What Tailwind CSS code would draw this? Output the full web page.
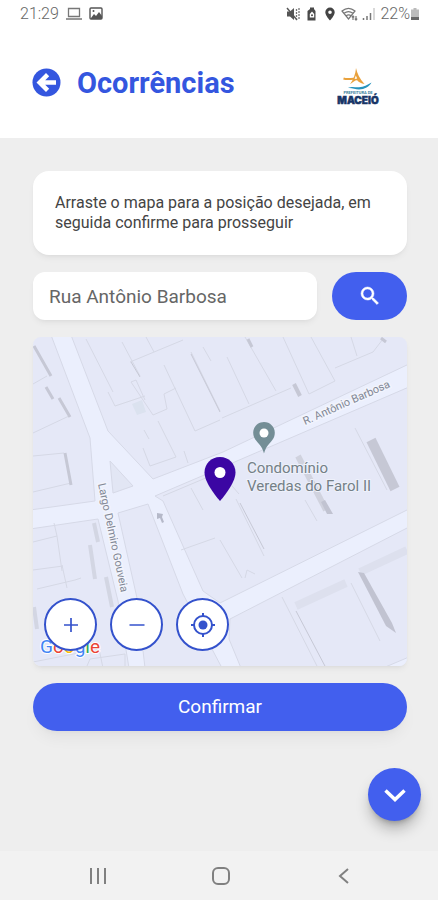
<!DOCTYPE html>
<html lang="pt-BR">
<head>
  <meta charset="UTF-8" />
  <meta name="viewport" content="width=device-width, initial-scale=1.0"/>
  <title>Ocorrências</title>
  <script src="https://cdn.jsdelivr.net/npm/@tailwindcss/browser@4"></script>
</head>
<body class="min-h-screen flex flex-col bg-[#eeeeee] font-[Roboto,sans-serif] text-[#444444]">

  <!-- Header -->
  <header class="bg-white h-[138px] flex flex-col shrink-0">
    <div class="h-[27px] pl-5 pr-[18px] flex items-center justify-between text-base font-light text-[#666666]">
      <div class="flex items-center gap-[7px]">
        <span>21:29</span>
        <svg class="w-4 h-[14px]" viewBox="0 0 16 14" fill="none" stroke="#777777" aria-hidden="true">
          <path d="M2.5 1.5h11v8h-11z M0 12h16" stroke-width="1.3"/>
        </svg>
        <svg class="w-[14px] h-[14px]" viewBox="0 0 14 14" aria-hidden="true">
          <rect x="1" y="1" width="12" height="11" rx="1" fill="none" stroke="#555555" stroke-width="1.4"/>
          <path d="M2 11l3-4 2 2 3-4 3 4v3H2z" fill="#555555"/>
          <circle cx="4.5" cy="4" r="1" fill="#555555"/>
        </svg>
      </div>
      <div class="flex items-center gap-1">
        <svg class="w-[15px] h-[14px]" viewBox="0 0 15 14" aria-hidden="true">
          <path d="M1 4.5h3L8 1v12L4 9.5H1z" fill="#555555"/>
          <path d="M1 1l10 12" stroke="#555555" stroke-width="1.4"/>
          <path d="M10.5 2v10M13 1v12" stroke="#777777" stroke-width="1.3" stroke-dasharray="2 1"/>
        </svg>
        <svg class="w-[14px] h-[14px]" viewBox="0 0 14 14" aria-hidden="true">
          <path d="M5 .5h4V2l1.5 2v9.5h-8V4L5 2z" fill="#4a4a4a"/>
          <path d="M7 4.5L9.200 7v3.500H4.800V7z" fill="#ffffff"/>
          <circle cx="7" cy="8.300" r="1" fill="#4a4a4a"/>
        </svg>
        <svg class="w-[14px] h-[14px]" viewBox="0 0 14 14" aria-hidden="true">
          <path d="M7 .5a4.700 4.700 0 0 0-4.700 4.700C2.300 8.500 7 13.500 7 13.500s4.700-5 4.700-8.300A4.700 4.700 0 0 0 7 .5zm0 3a1.800 1.800 0 1 1 0 3.600 1.800 1.800 0 0 1 0-3.600z" fill="#444444" fill-rule="evenodd"/>
        </svg>
        <svg class="w-[17px] h-[14px]" viewBox="0 0 17 14" fill="none" stroke="#777777" stroke-width="1.2" aria-hidden="true">
          <path d="M1 4c4-3.300 9-3.300 13 0L7.500 12z M3 6.300c3-2.300 6-2.300 9 0 M5 8.800c2-1.300 3.500-1.300 5 0"/>
          <path d="M12 13V9M10.800 10.300L12 9l1.200 1.300 M15 9v4M13.800 11.700L15 13l1.200-1.300"/>
        </svg>
        <svg class="w-[14px] h-[14px]" viewBox="0 0 14 14" aria-hidden="true">
          <path d="M1.500 11v2M5 9v4M8.500 6v7" stroke="#777777" stroke-width="1.5"/>
          <path d="M12 1v12" stroke="#cccccc" stroke-width="1.5"/>
        </svg>
        <div class="flex items-center">
          <span>22%</span>
          <svg class="w-[10px] h-[14px]" viewBox="0 0 10 14" aria-hidden="true">
            <path d="M3.500 1h3v1.500H9V10H1V2.500h2.500z" fill="#bbbbbb"/>
            <path d="M1 10h8v3H1z" fill="#666666"/>
          </svg>
        </div>
      </div>
    </div>
    <div class="flex-1 pl-8 pr-[57px] flex items-center justify-between">
      <div class="flex items-center gap-4">
        <a href="#" aria-label="Voltar">
          <svg class="w-[29px] h-[29px]" viewBox="0 0 29 29" aria-hidden="true">
            <circle cx="14.5" cy="14.5" r="14" fill="#3456df"/>
            <path d="M4.500 14.500L14 5l3.200 3.200-4 4H24v4.600H13.200l4 4L14 24z" fill="#ffffff"/>
          </svg>
        </a>
        <h1 class="text-[29px] leading-8 font-bold text-[#3456df]">Ocorrências</h1>
      </div>
      <svg class="w-[46px] h-10 mt-2" viewBox="0 0 46 40" role="img" aria-label="Prefeitura de Maceió">
        <path d="M21 1c1 5.500 4 11 8.500 16-3.500-.5-6-2-7.500-4-2 .3-4 2-7 4.300C18.500 12.500 20.500 7 21 1z" fill="#e9a13c"/>
        <path d="M8.500 11.500c4.500 1.600 9-.5 14 .7" stroke="#e9a13c" stroke-width="2" fill="none"/>
        <path d="M20.800 8.500l1.400 3-2.600.5z" fill="#ffffff"/>
        <path d="M13 21c4-2 7-.5 11-.8 5-.3 8-2.200 12.500-4.700-2 4-7 7-12.500 7-4 0-7-2-11-1.500z" fill="#2693bd"/>
        <text x="23" y="27" text-anchor="middle" font-family="Roboto, sans-serif" font-size="4" font-weight="700" fill="#397f9d">PREFEITURA DE</text>
        <text x="23" y="37" text-anchor="middle" font-family="Inter, sans-serif" font-size="10" font-weight="900" fill="#183567" stroke="#183567" stroke-width=".5">MACEIÓ</text>
      </svg>
    </div>
  </header>

  <!-- Content -->
  <main class="relative flex-1 pl-[33px] pr-[31px] pt-[33px] pb-[120px] flex flex-col gap-[17px]">
    <p class="bg-white rounded-2xl px-[22px] py-[22px] text-base leading-5 shadow-md shadow-black/5">Arraste o mapa para a posição desejada, em seguida confirme para prosseguir</p>

    <form class="flex gap-[15px]" onsubmit="return false">
      <input type="text" id="endereco" aria-label="Endereço" value="Rua Antônio Barbosa" class="flex-1 min-w-0 h-12 px-4 bg-white rounded-xl text-[19px] text-[#666666] shadow-md shadow-black/5"/>
      <button type="submit" aria-label="Buscar" class="w-[75px] h-12 rounded-full bg-[#425fee] flex items-center justify-center">
        <svg class="w-6 h-6" viewBox="0 0 24 24" fill="#ffffff" stroke="#ffffff" stroke-width=".5" aria-hidden="true">
          <path d="M15.500 14h-.79l-.28-.27A6.470 6.470 0 0 0 16 9.500 6.500 6.500 0 1 0 9.500 16c1.610 0 3.090-.59 4.230-1.570l.27.280v.79l5 4.990L20.490 19l-4.990-5zm-6 0C7.010 14 5 11.990 5 9.500S7.010 5 9.500 5 14 7.010 14 9.500 11.990 14 9.500 14z"/>
        </svg>
      </button>
    </form>

    <section aria-label="Mapa" class="relative h-[329px] rounded-lg overflow-hidden shadow-md shadow-black/5">
      <svg class="w-full h-full" viewBox="0 0 374 329" preserveAspectRatio="xMidYMid slice" font-family="Roboto, sans-serif">
        <rect width="374" height="329" fill="#e5e8f7"/>

        <!-- Roads -->
        <g fill="#ebeffd" stroke="#d6d9e7" stroke-width="1">
          <path d="M18-2H38L75 94L120 142L190 115L376 27V50L190 130L122 159L130 164L170 254L187 266L376 172V190L197 282L196 302L208 331H189L150 257L115 167L85 176L104 261L112 331H96L85 264L65 182L-3 192V173L62 164L57 101z"/>
          <path d="M77 124L100 149L80 156z" fill="#e2e6f4"/>
          <path d="M350 331L376 320V331z"/>
        </g>

        <!-- Lots and buildings -->
        <g fill="none" stroke="#d5d8e5" stroke-width="1">
          <path d="M0 96L36 79M0 47l14-8M0 119l31-3M0 155l38-9"/>
          <path d="M53 2L80 55M75 55l7 14 30-10M89 5l18 34M97 25l53-22M113 0l8 15M98 45l22 33 14-6-3-15 12-6M98 45l5-2 9 20"/>
          <path d="M131 28l31 66 25-11M158 15l29 59M125 84l18 36-26 9-7-18M111 93l5 9M151 114l4 12"/>
          <path d="M170 10l8 14M194 20l22 47M189 81l69-30M212 0l31 54M250 0l26 57 26-13M278 0l24 44M302 31l38-16 10-13M318 0l6 19"/>
          <path d="M130 159l57-24 19 22M158 151l12 22M187 203l22 38M203 162l28 57M212 241l2-8 8 4M148 213l34-12"/>
          <path d="M322 91l32 62M272 163l12 21M249 260l36 71M318 246l29 58M0 205l24-6 5 35M24 199l-3-13M0 233l30-4M4 252l38-9 6-2M29 228l5 23M14 278l30-4"/>
          <path d="M0 325l66-13 4 19M54 329l3-7 35-5v12"/>
        </g>

        <!-- Building shadows -->
        <g fill="none" stroke="#c6c8d5">
          <path d="M1 9l17 30M13 50l7 12M26 61l11 19M32 116l6 32" stroke-width="3"/>
          <path d="M61 186l4 19M57 208l5 34M73 240l6 30M1 270l3 22" stroke-width="4" stroke="#d3d6e3"/>
          <path d="M98 25l9 15M158 17l29 58M207 166l24 46M263 274l30 57" stroke-width="1"/>
          <path d="M215 2l4 8M348 1l5 4" stroke-width="3"/>
          <path d="M261 47l6 12" stroke-width="4"/>
          <path d="M265 119l28 54" stroke-width="6" stroke="#d0d2de"/>
          <path d="M338 103l24 49" stroke-width="10"/>
          <path d="M263 269l50-23M327 235l47-22" stroke-width="8" stroke="#dde0ee"/>
        </g>
        <path d="M325 235l6 1 28 50 4 10-10-7z" fill="#c1c3d1"/>
        <path d="M99 67l10-4 4 12-9 3z" fill="#dbe2ef"/>
        <path d="M288 165l4-2 8 14-6 0z" fill="#c1c3d1"/>
        <path d="M124 176l6 1-1 3 2 5-2 1-2-5-3 1z" fill="#b5b9c9"/>

        <!-- Street and place names -->
        <g fill="#818795" stroke="#f2f4fc" stroke-width="3" paint-order="stroke" font-size="11">
          <text transform="translate(272 88) rotate(-24)">R. Antônio Barbosa</text>
          <text transform="translate(65 147) rotate(78)">Largo Delmiro Gouveia</text>
        </g>
        <g fill="#748087" stroke="#eef1fb" stroke-width="2" paint-order="stroke" font-size="15">
          <text x="214" y="136">Condomínio</text>
          <text x="214" y="154">Veredas do Farol II</text>
        </g>

        <!-- Pins -->
        <path d="M231 85c-6 0-10.800 4.800-10.800 10.800 0 5 2.800 8 5.800 11.200 2.800 3 4 6 5 9.500 1-3.500 2.200-6.500 5-9.500 3-3.200 5.800-6.200 5.800-11.200C241.800 89.800 237 85 231 85z" fill="#748e96"/>
        <circle cx="231" cy="96" r="4.5" fill="#ffffff"/>
        <path d="M187 120c-8.700 0-15.500 6.800-15.500 15.500C171.500 147 187 164 187 164s15.500-17 15.500-28.500C202.500 126.800 195.700 120 187 120z" fill="#3b06a3"/>
        <circle cx="187" cy="135.500" r="5.5" fill="#ffffff"/>

        <text x="7" y="316" font-size="19" stroke="#ffffff" stroke-width="2" paint-order="stroke"><tspan fill="#4285f4">G</tspan><tspan fill="#ea4335">o</tspan><tspan fill="#fbbc05">o</tspan><tspan fill="#4285f4">g</tspan><tspan fill="#34a853">l</tspan><tspan fill="#ea4335">e</tspan></text>
      </svg>

      <div class="absolute left-[11px] bottom-[15px] flex gap-[13px]">
        <button type="button" aria-label="Aumentar zoom" class="w-[53px] h-[53px] rounded-full bg-white border-2 border-[#3452cc] flex items-center justify-center">
          <svg class="w-6 h-6" viewBox="0 0 24 24" stroke="#3452cc" stroke-width="1.7" aria-hidden="true"><path d="M12 5v14M5 12h14"/></svg>
        </button>
        <button type="button" aria-label="Diminuir zoom" class="w-[53px] h-[53px] rounded-full bg-white border-2 border-[#3452cc] flex items-center justify-center">
          <svg class="w-6 h-6" viewBox="0 0 24 24" stroke="#3452cc" stroke-width="1.7" aria-hidden="true"><path d="M4.500 12h15"/></svg>
        </button>
        <button type="button" aria-label="Minha localização" class="w-[53px] h-[53px] rounded-full bg-white border-2 border-[#3452cc] flex items-center justify-center">
          <svg class="w-[26px] h-[26px]" viewBox="0 0 26 26" fill="none" stroke="#3452cc" stroke-width="2" aria-hidden="true">
            <circle cx="13" cy="13" r="9"/>
            <circle cx="13" cy="13" r="4.5" fill="#3452cc" stroke="none"/>
            <path d="M13 1v3M13 22v3M1 13h3M22 13h3"/>
          </svg>
        </button>
      </div>
    </section>

    <button type="button" class="h-12 shrink-0 rounded-full bg-[#425fee] text-white text-[19px] shadow-lg shadow-black/5">Confirmar</button>

    <button type="button" aria-label="Mais opções" class="absolute right-[17px] bottom-[30px] w-[53px] h-[53px] rounded-full bg-[#425fee] shadow-lg shadow-black/30 flex items-center justify-center">
      <svg class="w-6 h-6" viewBox="0 0 24 24" fill="none" stroke="#ffffff" stroke-width="3.5" aria-hidden="true"><path d="M2.500 7.500l9.500 9 9.500-9"/></svg>
    </button>
  </main>

  <!-- System navigation -->
  <nav class="h-[50px] pl-1 shrink-0 bg-[#f2f2f2] flex items-center justify-center gap-[101px]">
    <button type="button" aria-label="Recentes">
      <svg class="w-[22px] h-[22px]" viewBox="0 0 22 22" stroke="#808080" stroke-width="2" aria-hidden="true"><path d="M4 3v16M11 3v16M18 3v16"/></svg>
    </button>
    <button type="button" aria-label="Início">
      <svg class="w-[22px] h-[22px]" viewBox="0 0 22 22" fill="none" stroke="#808080" stroke-width="2" aria-hidden="true"><rect x="3" y="3" width="16" height="16" rx="5"/></svg>
    </button>
    <button type="button" aria-label="Voltar">
      <svg class="w-[22px] h-[22px]" viewBox="0 0 22 22" fill="none" stroke="#808080" stroke-width="2" aria-hidden="true"><path d="M15 4L7 11l8 7"/></svg>
    </button>
  </nav>

</body>
</html>
